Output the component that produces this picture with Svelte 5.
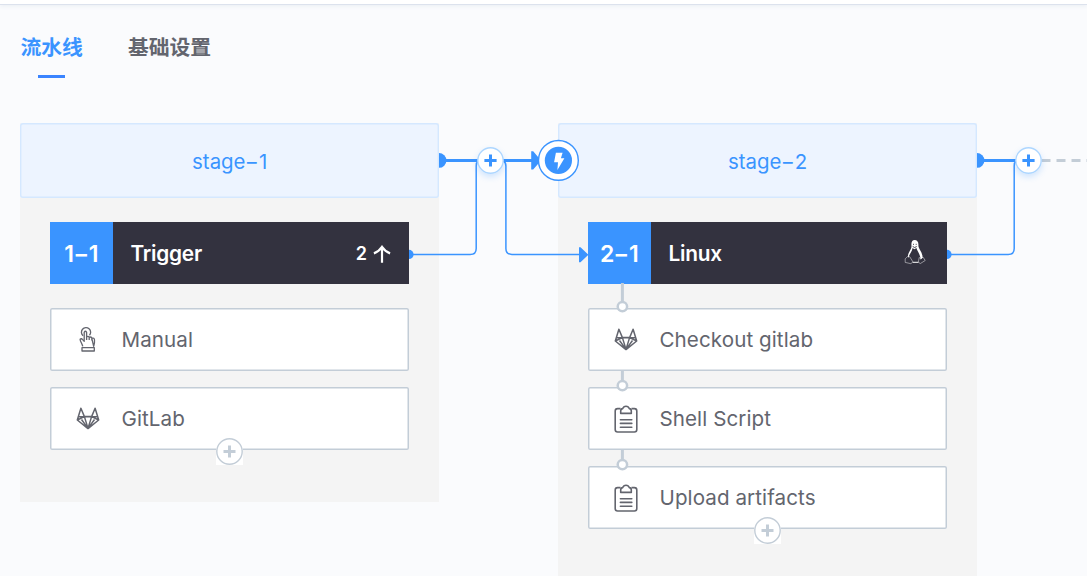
<script>
  const tabs = ['流水线', '基础设置'];
  const stages = [
    {
      name: 'stage', no: '1', last: false, linked: false,
      job: { a: '1', b: '1', title: 'Trigger', count: '2' },
      steps: [
        { icon: 'hand', label: 'Manual' },
        { icon: 'gitlab', label: 'GitLab' }
      ]
    },
    {
      name: 'stage', no: '2', last: true, linked: true,
      job: { a: '2', b: '1', title: 'Linux', count: '' },
      steps: [
        { icon: 'gitlab', label: 'Checkout gitlab' },
        { icon: 'clip', label: 'Shell Script' },
        { icon: 'clip', label: 'Upload artifacts' }
      ]
    }
  ];
</script>

<div class="page">
  <div class="topline"></div>
  <nav>
    {#each tabs as tab, i}
      <div class="tab" class:active={i === 0}>{tab}</div>
    {/each}
  </nav>

  <main>
    {#each stages as stage}
      <section class="stage" class:tall={stage.linked}>
        <header><span class="name">{stage.name}<i>-</i>{stage.no}</span></header>

        <div class="job">
          <div class="num"><span>{stage.job.a}<i>-</i>{stage.job.b}</span></div>
          <div class="title">{stage.job.title}</div>
          {#if stage.job.count}
            <div class="count">{stage.job.count}</div>
            <svg class="up" width="18" height="18" viewBox="0 0 18 18" fill="none" stroke="#fff" stroke-width="2.2">
              <path d="M.9 8.4C4.4 7.2 7.2 4.6 9 1.9C10.8 4.6 13.6 7.2 17.1 8.4M9 3v14.8" />
            </svg>
          {:else}
            <svg class="tux" width="22" height="26" viewBox="0 0 22 26" fill="none" stroke="#fff">
              <path d="M7.5 7C7 2.8 8.3 1 10.7 1s4 1.9 3.7 5.4c0 3.5 4.3 6.4 4.2 12.4l-2 1.6c-.4-5.4-3.2-7.8-4.2-11.4l-2 1.3-1.8-1.3c-.8 4.6-3.8 6-3.8 10L4 17.4C3.8 13.2 7.6 10.6 7.5 7Z" fill="#fff" stroke="none" />
              <path d="M9 5.3h1M11.7 5.3h1M8.7 7.5l2 1 2-1" stroke="#33323f" stroke-width=".9" />
              <path d="M4 17.2L1.2 19.8v3.6l5.7 1.3 2-1.9-3.2-5.1zM15.2 18.5l1.6 1.2 2.2-1.6 2.2 3.4-4.8 3-2.1-1.2z" stroke-width=".8" opacity=".6" />
              <path d="M8.7 23.3h5.6" />
            </svg>
          {/if}
        </div>

        <div class="steps">
          {#each stage.steps as step, i}
            <div class="step">
              {#if stage.linked}
                <svg class="link" width="14" height="30" viewBox="0 0 14 30" fill="none" stroke="#c3cdd7">
                  <path d={i === 0 ? 'M7.4 0V19' : 'M7.4 8V19'} stroke-width="3" />
                  <circle cx="7.4" cy="23.6" r="4.7" stroke-width="2.5" fill="#fff" />
                </svg>
              {/if}
              <div class="icon">
                {#if step.icon === 'gitlab'}
                  <svg width="24" height="23" viewBox="0 0 24 23" fill="none" stroke="#63656e" stroke-width="1.5" stroke-linejoin="round">
                    <path d="M4.9 1.2L1.3 13 12 21.6 22.7 13 19.1 1.2 15.6 9.6H8.4ZM2.2 9.8H21.8M8.4 9.6L12 21.4 15.6 9.6M1.3 13L8.4 9.6M22.7 13L15.6 9.6M5.5 12.5L12 21.4 18.5 12.5" />
                  </svg>
                {:else if step.icon === 'clip'}
                  <svg width="24" height="28" viewBox="0 0 24 28" fill="none" stroke="#63656e" stroke-width="1.6" stroke-linejoin="round">
                    <path d="M6.5 3.6H3.6Q1.2 3.6 1.2 6V24.6Q1.2 27 3.6 27H20.4Q22.8 27 22.8 24.6V6Q22.8 3.6 20.4 3.6H17.5" />
                    <path d="M6.7 8.4V6Q6.7 3.7 8.7 3.6Q9.5 1.2 12 1.2T15.3 3.6Q17.3 3.7 17.3 6V8.4Z" />
                    <path d="M6.4 14.7H17.8M6.4 18.4H17.8M6.4 22.2H17.8" stroke-linecap="round" />
                  </svg>
                {:else}
                  <svg width="18" height="25" viewBox="0 0 18 25" fill="none" stroke="#63656e" stroke-width="1.3" stroke-linejoin="round">
                    <path d="M4.1 8.8A4.6 4.6 0 1 1 10.5 8.3" />
                    <path d="M3.7 19.4C3.2 16.3 1.2 14.9 1.1 12.2Q2.3 11.1 3.6 12.6L5.2 14.2V5.3Q6.4 3.2 7.6 5.3V13M7.6 10Q9 8.8 10.2 10V13M10.2 10.5Q11.8 9.4 12.8 10.8V13.6M12.8 11.3Q15.4 10.3 15.5 13Q15.8 16.4 14.7 19.4Z" />
                    <path d="M3 20.6H15.3V24H3Z" />
                  </svg>
                {/if}
              </div>
              <div class="label">{step.label}</div>
            </div>
          {/each}
          <div class="add">
            <svg width="27" height="27" viewBox="0 0 27 27" fill="none" stroke="#c3cdd7">
              <circle cx="13.5" cy="13.5" r="12.7" stroke-width="1.4" />
              <path d="M7.5 13.5h12M13.5 7.5v12" stroke-width="3" />
            </svg>
          </div>
        </div>

        <svg class="wires" width="150" height="150" viewBox="438 130 150 150" fill="none" stroke="#3a94ff">
          <path d="M439 153a7.3 7.3 0 0 1 0 14.8Z" fill="#3a94ff" stroke="none" />
          <path d="M409 249.8a4.6 4.6 0 0 1 0 9.2Z" fill="#3a94ff" stroke="none" />
          <path d="M439 160.5H478" stroke-width="3" />
          <path d="M409 254.4H470.2Q476.2 254.4 476.2 248.4V166Q476.2 162.5 478.5 161" stroke-width="1.5" />
          {#if stage.last}
            <path d="M1041.5 160.5H1100" transform="translate(-538 0)" stroke="#c3cdd7" stroke-width="3" stroke-dasharray="9 6" />
          {:else}
            <path d="M503 160.5H533" stroke-width="3" />
            <path d="M503.5 161Q505.9 162.5 505.9 166V248.4Q505.9 254.4 511.9 254.4H580" stroke-width="1.5" />
            <path d="M531.2 151.3h2L541 160.5 533.2 169.4h-2ZM579 247.2h1.5L588.4 254.7 580.5 262.2H579Z" fill="#3a94ff" stroke="none" />
          {/if}
        </svg>
        <div class="plus">
          <svg width="27" height="27" viewBox="0 0 27 27">
            <circle cx="13.5" cy="13.5" r="12.7" fill="#fff" stroke="#add6ff" stroke-width="1.4" />
            <path d="M7.4 13.5h12.2M13.5 7.4v12.2" stroke="#3a94ff" stroke-width="3" />
          </svg>
        </div>
        {#if stage.linked}
          <svg class="bolt" width="42" height="42" viewBox="0 0 42 42">
            <circle cx="21.4" cy="21.4" r="19.9" fill="#fff" stroke="#3a94ff" stroke-width="1.4" />
            <circle cx="21.4" cy="21.4" r="13.6" fill="#3a94ff" />
            <path d="M18.9 13.8H25.6L23.9 19.3H27.4L20.4 31.1L21 23.3H17.1Z" fill="#fff" />
          </svg>
        {/if}
      </section>
    {/each}
  </main>
</div>

<style>
  :global(body) { margin: 0; overflow: hidden; }
  .page {
    width: 1087px; height: 576px; overflow: hidden;
    background: #fafbfd; color: #63656e;
    font-family: Inter, "Noto Sans CJK SC", sans-serif;
  }
  .topline { height: 4px; background: #fff; border-bottom: 1px solid #dce2ed; box-shadow: 0 1px 4px #e9edf3; }
  nav { display: flex; gap: 45px; padding: 26px 20.5px 0; height: 91.4px; box-sizing: border-box; }
  .tab {
    position: relative; height: 47px;
    font: 700 20.8px/30px "Noto Sans CJK SC", sans-serif;
  }
  .active { color: #3a94ff; }
  .active::after {
    content: ""; position: absolute; left: 17.5px; bottom: 0; width: 27px; height: 3px;
    background: #3a84ff;
  }
  main { display: flex; gap: 119.5px; padding: 27px 0 0 20.4px; width: 1100px; align-items: flex-start; }
  .stage { position: relative; flex: none; width: 418.5px; height: 379px; background: #f4f4f4; }
  .stage.tall { height: 480px; }
  header {
    height: 74.5px; border-radius: 3px; background: #edf4ff; box-shadow: inset 0 0 0 1.4px #d5e8ff;
    display: flex; align-items: center; justify-content: center; color: #3a94ff;
  }
  i { font-style: normal; display: inline-block; transform: scaleX(1.5); margin: 0 2px; }
  .name { font-size: 20.4px; padding-top: 1.5px; }
  .job {
    display: flex; align-items: center; margin: 23.8px 30px 0 29.5px; height: 62.7px;
    background: #33323f; color: #fff; font-weight: 600;
  }
  .num {
    width: 63px; height: 62.7px; background: #3a94ff; font-size: 23px;
    display: flex; align-items: center; justify-content: center;
  }
  .num span { padding-top: 1px; }
  .title { flex: 1; padding: 0 0 0 17.5px; font-size: 20.8px; letter-spacing: -.2px; }
  .count { font-size: 18px; padding-top: 1px; }
  .up { margin: 1px 18px 0 6px; }
  .tux { margin-right: 21px; margin-top: -3px; }
  .steps { display: flex; flex-direction: column; gap: 16px; margin: 24.1px 30px 0 29.5px; position: relative; }
  .step {
    position: relative; display: flex; align-items: center; height: 63px;
    background: #fff; border-radius: 2px; box-shadow: inset 0 0 0 1.5px #c3cdd7;
  }
  .icon { width: 71.6px; display: flex; justify-content: center; padding-left: 4.4px; box-sizing: border-box; }
  .label { font-size: 20.6px; letter-spacing: .08px; white-space: nowrap; }
  .link { position: absolute; left: 27.3px; top: -25px; }
  .add { position: absolute; left: 166px; bottom: -15px; width: 27px; height: 27px; background: #fff; }
  .add svg, .plus svg { display: block; }
  .wires { position: absolute; z-index: 1; left: 417.6px; top: 6.6px; overflow: visible; pointer-events: none; }
  .plus { position: absolute; z-index: 2; left: 457px; top: 23.6px; border-radius: 50%; box-shadow: 0 3px 6px #3a94ff38; }
  .bolt { position: absolute; z-index: 2; left: -21px; top: 16px; }
</style>
